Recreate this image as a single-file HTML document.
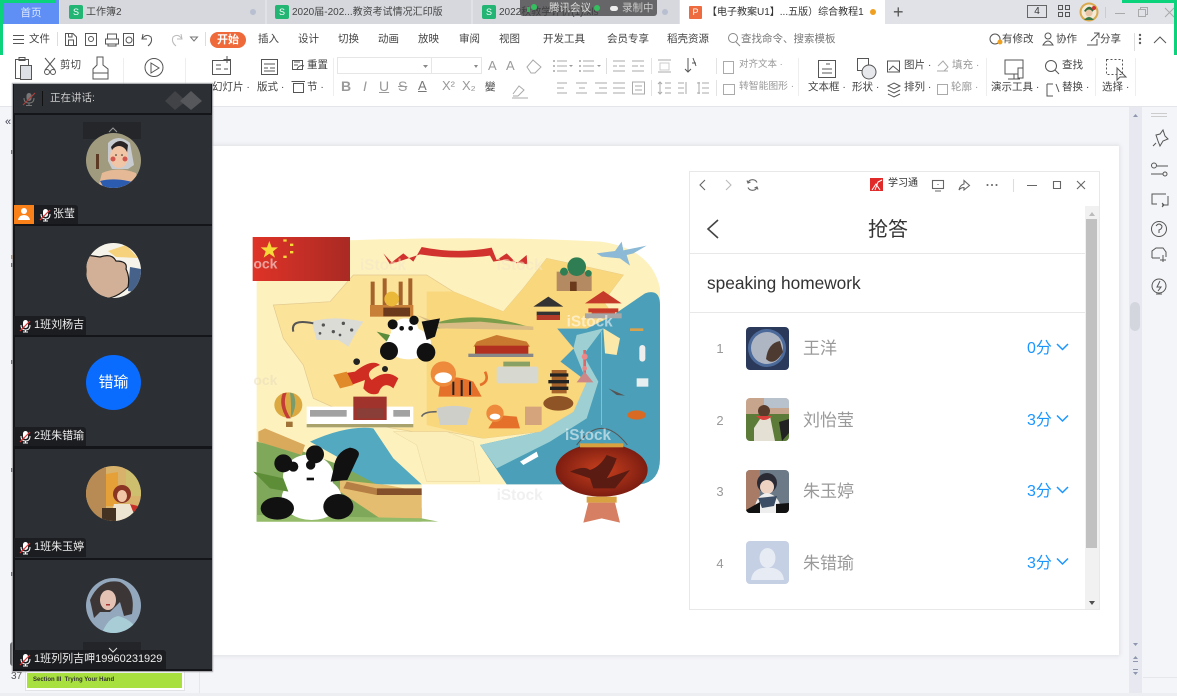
<!DOCTYPE html>
<html lang="zh"><head><meta charset="utf-8"><title>WPS</title>
<style>
html,body{margin:0;padding:0;width:1177px;height:696px;overflow:hidden;background:#f4f5f8;font-family:"Liberation Sans","Noto Sans CJK SC",sans-serif}
div,svg,span{position:absolute;box-sizing:border-box}
.t{white-space:nowrap;font-size:10.5px;color:#444;line-height:14px}
.g{color:#999}
.tab{top:0;height:24px;background:#d6d8dd}
.tt{top:5px;font-size:10px;color:#444;white-space:nowrap;line-height:15px}
.s{width:14px;height:14px;top:5px;background:#22b573;border-radius:2px;color:#fff;font-size:9px;line-height:14px;text-align:center}
.dot{width:6px;height:6px;border-radius:3px;background:#b8bfd0;top:9px}
.cell{left:15px;width:197px;height:109px;background:#2c2f33}
.av{left:86px;width:55px;height:55px;overflow:hidden;border-radius:50%}
.tag{left:14px;height:19px;background:#1c1d20;border-radius:0 3px 0 0;color:#eee;font-size:11px;line-height:19px;white-space:nowrap;padding-left:20px}
.mic{left:4px;top:3px;width:14px;height:14px}
.row{left:746px;width:43px;height:43px;border-radius:4px;overflow:hidden}
.n{left:716px;width:8px;font-size:13px;color:#999;text-align:center;line-height:18px}
.nm{left:803px;font-size:17px;color:#999;line-height:24px;white-space:nowrap}
.sc{left:1027px;font-size:16px;color:#1a96ff;line-height:22px;white-space:nowrap}
.k{width:2px;height:4px;left:11px;background:#667}
</style></head><body>

<!-- tab strip -->
<div style="left:0;top:0;width:1177px;height:24px;background:#e0e2e7"></div>
<div style="left:3px;top:0;width:56px;height:24px;background:#5f8ff5;color:#dfe8ff;font-size:10.5px;line-height:27px;text-align:center">首页</div>
<div class="tab" style="left:60px;width:205px"></div>
<div class="s" style="left:69px">S</div><div class="tt" style="left:86px">工作簿2</div><div class="dot" style="left:250px"></div>
<div class="tab" style="left:267px;width:204px"></div>
<div class="s" style="left:275px">S</div><div class="tt" style="left:292px">2020届-202...教资考试情况汇印版</div>
<div class="tab" style="left:473px;width:206px"></div>
<div class="s" style="left:482px">S</div><div class="tt" style="left:499px">2022秋教学评价(1).xls</div>
<div class="dot" style="left:662px"></div>
<div style="left:680px;top:0;width:205px;height:24px;background:#fff"></div>
<div style="left:689px;top:6px;width:13px;height:13px;background:#ee6b3f;border-radius:1px;color:#fff;font-size:9px;line-height:13px;text-align:center">P</div>
<div class="tt" style="left:707px;color:#333">【电子教案U1】...五版）综合教程1</div>
<div style="left:870px;top:9px;width:6px;height:6px;border-radius:3px;background:#f0a020"></div>
<div class="t" style="left:893px;top:2px;font-size:18px;line-height:20px;color:#555">+</div>
<!-- tencent overlay -->
<div style="left:520px;top:0;width:137px;height:16px;background:rgba(62,62,64,.74);border-radius:0 0 3px 3px"></div>
<div style="left:527px;top:7px;width:3px;height:5px;background:#35b35a"></div>
<div style="left:531px;top:4px;width:6px;height:6px;border-radius:3px;background:#35c060"></div>
<div class="t" style="left:549px;top:1px;color:#ddd">腾讯会议</div>
<div style="left:594px;top:5px;width:6px;height:6px;border-radius:3px;background:#35c060"></div>
<div style="left:610px;top:6px;width:8px;height:5px;background:#eee;border-radius:3px"></div>
<div class="t" style="left:622px;top:1px;color:#ccc">录制中</div>
<!-- title right -->
<div style="left:1027px;top:5px;width:20px;height:13px;border:1px solid #666;font-size:10px;line-height:11px;text-align:center;color:#333">4</div>
<svg style="left:1057px;top:4px" width="14" height="14" fill="none" stroke="#555"><rect x="1.5" y="1.5" width="4" height="4"/><rect x="8.5" y="1.5" width="4" height="4"/><rect x="1.5" y="8.5" width="4" height="4"/><rect x="8.5" y="8.5" width="4" height="4"/></svg>
<svg style="left:1079px;top:2px" width="20" height="20"><circle cx="10" cy="10" r="9.5" fill="#d9a94f"/><circle cx="10" cy="10" r="7.5" fill="#f3e9d5"/><path d="M5 9Q10 1 15 8L13 10H7Z" fill="#2e6b3d"/><circle cx="10" cy="11" r="3.5" fill="#eac4a4"/><path d="M5 18Q10 12 15 18Z" fill="#3a7a48"/><circle cx="15" cy="6" r="2" fill="#c33"/></svg>
<div style="left:1105px;top:7px;width:1px;height:11px;background:#ccc"></div>
<svg style="left:1114px;top:6px" width="62" height="14" fill="none" stroke="#aaa"><path d="M1 7.5H11"/><rect x="24.5" y="3.5" width="7" height="7"/><path d="M26.5 3.5V1.5H33.500V8.5H31.500"/><path d="M51 2L60 11M60 2L51 11"/></svg>
<!-- green corners -->
<div style="left:0;top:0;width:55px;height:3px;background:#0ad37c"></div>
<div style="left:0;top:0;width:3px;height:55px;background:#0ad37c"></div>
<div style="left:1122px;top:0;width:55px;height:3px;background:#0ad37c"></div>
<div style="left:1174px;top:0;width:3px;height:55px;background:#0ad37c"></div>

<!-- ribbon -->
<div style="left:3px;top:24px;width:1171px;height:31px;background:#fff"></div>
<div style="left:0;top:55px;width:1177px;height:51px;background:#fff"></div>
<div style="left:0;top:106px;width:1177px;height:1px;background:#e4e5ea"></div>
<svg style="left:0;top:24px" width="1177" height="82" fill="none" stroke="#555" stroke-width="1">
<path d="M13 11.500H24M13 15.500H24M13 19.500H24"/>
<path d="M57.500 8V22M205.500 8V22" stroke="#ddd"/>
<path d="M65.500 9.500H73L76.500 13V21.500H65.500ZM68.500 21V16H73.500V21M68.500 10V13H72V10"/>
<rect x="85.500" y="9.500" width="11" height="12"/><circle cx="91" cy="15" r="2.500"/>
<path d="M107.500 15V10H116.500V15M105.500 15H118.500V20H105.500ZM108 20V22H116V20"/>
<rect x="123.500" y="9.500" width="10" height="12"/><circle cx="129" cy="16" r="3"/>
<path d="M143 10L142 15H147M142 15Q146 9 151 13Q153 18 148 22"/>
<path d="M181 10L182 15H177M182 15Q178 9 173 13Q171 18 176 22" stroke="#bbb"/>
<path d="M190.500 13H197.500L194 17Z" stroke="#777"/>
<!-- toolbar big icons -->
<rect x="15.500" y="35.500" width="13" height="19"/><rect x="20.500" y="41.500" width="11" height="14" fill="#dde0e5"/><rect x="19" y="33.500" width="6" height="3"/>
<path d="M45 34L55 46M55 34L45 46"/><circle cx="47" cy="48" r="2.500"/><circle cx="53" cy="48" r="2.500"/>
<path d="M97 33H103V41L108 45V55H93V45L97 41Z"/><path d="M93 49H108"/>
<path d="M123.500 34V70M185.500 34V70M333.500 34V72" stroke="#eee"/>
<circle cx="154" cy="43.500" r="9"/><path d="M151 39L159 44L151 49Z"/>
<rect x="212.500" y="36.500" width="18" height="14"/><path d="M216 41H221M216 45H221M224 45H228M227 32V39M223.500 35.500H231"/>
<rect x="261.500" y="35.500" width="16" height="15"/><path d="M264 40H275M264 44H268M270 44H275M264 47H275"/>
<rect x="292.500" y="36.500" width="10" height="9"/><path d="M304 42A5 5 0 0 0 297 46M294 38H300M294 41H298"/>
<rect x="293.500" y="59.500" width="10" height="9"/><path d="M291.500 57.500H305"/>
<!-- font inputs -->
<rect x="337.500" y="33.500" width="94" height="16" stroke="#e6e6e6"/><rect x="431.500" y="33.500" width="50" height="16" stroke="#e6e6e6"/>
<path d="M423 41L428 41L425.500 44ZM474 41L478 41L476 44" fill="#888" stroke="none"/>
<g stroke="#aaa">
<path d="M527 43L533 36L541 43L535 49H531Z"/>
<!-- list row 1 -->
<path d="M557 37H567M557 42H567M557 47H567M583 37H594M583 42H594M583 47H594" />
<path d="M553 37H555M553 42H555M553 47H555M579 37H581M579 42H581M579 47H581" stroke="#777"/>
<path d="M569 41H573L571 43ZM597 41H601L599 43Z" fill="#999" stroke="none"/>
<path d="M606.500 34V50" stroke="#ddd"/>
<path d="M613 37H625M619 42H625M613 47H625M613 42H617M632 37H644M632 42H638M632 47H644M640 42H644"/>
<path d="M658 36H671M658 48H671"/><rect x="660" y="39" width="9" height="7" stroke="#ccc"/>
<path d="M651.500 34V50M651.500 56V72M716.500 34V50M716.500 56V72" stroke="#e3e3e3"/>
<path d="M688 34V48M685 45L688 48L691 45" stroke="#555"/><path d="M693 34L696 42M692 39H696" stroke="#555"/>
<!-- list row 2 -->
<path d="M557 59H567M557 64H564M557 69H567M576 59H587M579 64H585M576 69H587M595 59H607M599 64H607M595 69H607M613 59H625M613 64H625M613 69H625M632.500 58V70H644.500V58ZM635 62H642M635 66H642"/>
<path d="M660 58V70M658 60L660 58L662 60M658 68L660 70L662 68M665 59H671M665 64H671M665 69H671M678 59H684M678 64H684M678 69H684M686 58V70M697 59H700M697 69H700M702 59H709M702 64H709M702 69H709M699 58V70"/>
<rect x="723.500" y="37.500" width="10" height="12"/><rect x="723.500" y="60.500" width="11" height="10"/>
</g>
<path d="M798.500 34V72M986.500 34V72M1095.500 34V72M1135.500 34V72" stroke="#eee"/>
<rect x="818.500" y="36.500" width="17" height="17"/><path d="M822 45H832M822 49H832M826 40H830"/>
<rect x="857.500" y="34.500" width="11" height="12"/><circle cx="869" cy="48" r="7" fill="#e7e8ec"/>
<rect x="887.500" y="37" width="12" height="11"/><path d="M889 46L893 42L899 47"/>
<path d="M888 62L894 59L900 62L894 65ZM888 66L894 69L900 66M888 70L894 73L900 70"/>
<path d="M937 47H948M938 42L943 37L948 43L944 47" stroke="#aaa"/><rect x="937.500" y="60.500" width="10" height="10" stroke="#aaa"/>
<path d="M1005 36H1023V50H1005ZM1014 50V55M1008 55H1020"/><rect x="1018" y="44" width="5" height="10" fill="#fff"/>
<circle cx="1051" cy="42" r="5.500"/><path d="M1055 46L1059 50"/>
<path d="M1047 60H1053M1047 60V72H1053M1056 60L1059 68"/>
<rect x="1106.500" y="35.500" width="16" height="15" stroke-dasharray="2 2"/><path d="M1117 44V56L1120 53L1126 53Z"/>
<path d="M1154 19L1160 13L1166 19"/>
<circle cx="1140" cy="11" r="0.700"/><circle cx="1140" cy="15" r="0.700"/><circle cx="1140" cy="19" r="0.700"/>
<path d="M1134.500 9V27" stroke="#ddd"/>
<circle cx="995" cy="15" r="5"/><circle cx="1000" cy="18" r="2.500" fill="#f0a020" stroke="none"/>
<circle cx="1048" cy="12" r="3"/><path d="M1043 21Q1048 13 1053 21Z"/>
<path d="M1087 21H1097V15M1091 17L1099 9M1094 9H1099V14"/>
<circle cx="733" cy="14" r="4.500" stroke="#888"/><path d="M736 18L740 22" stroke="#888"/>
<path d="M513 70L519 62L524 66L518 72H513M512 74H528" stroke="#aaa"/>
</svg>
<div style="left:210px;top:32px;width:36px;height:16px;background:#ee6a3a;border-radius:8px;color:#fff;font-size:11px;font-weight:bold;line-height:16px;text-align:center">开始</div>
<span class="t" style="left:29px;top:32px">文件</span>
<span class="t" style="left:258px;top:32px">插入</span><span class="t" style="left:298px;top:32px">设计</span><span class="t" style="left:338px;top:32px">切换</span><span class="t" style="left:378px;top:32px">动画</span><span class="t" style="left:418px;top:32px">放映</span><span class="t" style="left:459px;top:32px">审阅</span><span class="t" style="left:499px;top:32px">视图</span><span class="t" style="left:543px;top:32px">开发工具</span><span class="t" style="left:607px;top:32px">会员专享</span><span class="t" style="left:667px;top:32px">稻壳资源</span>
<span class="t" style="left:741px;top:32px;color:#777">查找命令、搜索模板</span>
<span class="t" style="left:1002px;top:32px">有修改</span><span class="t" style="left:1056px;top:32px">协作</span><span class="t" style="left:1100px;top:32px">分享</span>
<span class="t" style="left:60px;top:58px">剪切</span><span class="t" style="left:307px;top:58px">重置</span><span class="t g" style="left:739px;top:58px;font-size:9.500px">对齐文本 ·</span><span class="t" style="left:904px;top:58px">图片 ·</span><span class="t g" style="left:952px;top:58px">填充 ·</span><span class="t" style="left:1062px;top:58px">查找</span>
<span class="t" style="left:212px;top:80px">幻灯片 ·</span><span class="t" style="left:257px;top:80px">版式 ·</span><span class="t" style="left:307px;top:80px">节 ·</span><span class="t g" style="left:739px;top:80px;font-size:9.800px">转智能图形 ·</span><span class="t" style="left:808px;top:80px">文本框 ·</span><span class="t" style="left:852px;top:80px">形状 ·</span><span class="t" style="left:904px;top:80px">排列 ·</span><span class="t g" style="left:951px;top:80px">轮廓 ·</span><span class="t" style="left:991px;top:80px">演示工具 ·</span><span class="t" style="left:1062px;top:80px">替换 ·</span><span class="t" style="left:1102px;top:80px">选择 ·</span>
<span class="t g" style="left:341px;top:79px;font-size:14px;font-weight:bold">B</span><span class="t g" style="left:363px;top:79px;font-size:14px;font-style:italic">I</span><span class="t g" style="left:379px;top:79px;font-size:14px;text-decoration:underline">U</span><span class="t g" style="left:398px;top:79px;font-size:14px;text-decoration:line-through">S</span><span class="t" style="left:418px;top:79px;font-size:13px;color:#777;text-decoration:underline">A</span><span class="t g" style="left:442px;top:79px;font-size:13px">X²</span><span class="t g" style="left:462px;top:79px;font-size:13px">X₂</span><span class="t" style="left:485px;top:80px">變</span><span class="t g" style="left:488px;top:59px;font-size:13px">A</span><span class="t g" style="left:506px;top:59px;font-size:13px">A</span>

<!-- workspace -->
<div style="left:0;top:107px;width:200px;height:589px;background:#f4f5f8;border-right:1px solid #e6e7eb"></div>
<div class="t" style="left:5px;top:115px;font-size:11px;color:#445">«</div>
<div class="k" style="top:150px"></div><div class="k" style="top:255px;background:#d9924a"></div><div class="k" style="top:263px"></div><div class="k" style="top:360px"></div><div class="k" style="top:468px"></div><div class="k" style="top:572px"></div>
<div style="left:212px;top:146px;width:907px;height:509px;background:#fff;box-shadow:0 0 4px 1px #dfe0e4"></div>

<!-- map -->
<svg style="left:240px;top:225px" width="430" height="310" viewBox="0 0 1290 930">
<defs><linearGradient id="fl"><stop offset="0" stop-color="#df3327"/><stop offset="1" stop-color="#a92a24"/></linearGradient>
<radialGradient id="la" cx=".5" cy=".5" r=".6"><stop offset="0" stop-color="#c8401d"/><stop offset="1" stop-color="#6e160f"/></radialGradient></defs>
<path d="M50 60Q600 25 1080 50Q1235 70 1260 190V690Q1260 770 1200 778H545V890H50V200Z" fill="#fdf1bd"/>
<path d="M1215 205Q1260 190 1260 240V700Q1260 770 1200 778H800L720 660L900 620L1000 560L1040 470L960 410L1000 370L950 310H1040L1120 270Z" fill="#4c9fb8"/>
<path d="M1000 370L1040 470L1000 560L900 620L720 660L770 730L930 650L1040 580L1075 470L1030 390L1090 310L1010 330Z" fill="#9ed0d3"/>
<path d="M1090 310L1140 340L1130 390L1095 385Z" fill="#fbe9a9"/>
<path d="M210 650Q320 600 400 610L460 700L545 778H330L300 700Z" fill="#52a9c0"/>
<path d="M100 240L270 230L340 150L560 150L640 200L790 260L850 190L920 100L1060 130L1150 150L1090 230L1120 270L1040 310L950 310L1000 370L960 410L1040 470L1000 560L900 620L730 640L620 620L520 620L400 600L220 520L190 420L130 340Z" fill="#fbe39a" stroke="#e3c98e" stroke-width="2"/>
<path d="M560 200L640 200L790 260L850 190L920 100L1060 130L1150 150L1090 230L1120 270L1040 310L950 310L1000 370L960 410L1040 470L1000 560L900 620L730 640L560 600Z" fill="#f9d77c"/>
<path d="M460 620L530 660L560 770H720L700 650L620 620Z" fill="#fbeeb8" stroke="#e3c98e"/>
<!-- flag -->
<rect x="38" y="36" width="292" height="132" fill="url(#fl)"/>
<path d="M88 48L95 67L114 67L99 79L105 98L88 86L71 98L77 79L62 67H81Z" fill="#f8d93a"/>
<path d="M130 43h10v7h-10zM150 56h10v7h-10zM150 78h10v7h-10zM130 92h10v7h-10z" fill="#f8d93a"/>
<!-- ribbon -->
<path d="M430 85L455 112L490 85L520 110L545 66Q650 88 755 68L770 105L800 85L830 115L860 90L862 118L820 110L790 105L760 110L750 92Q650 105 540 88L490 105L450 118Z" fill="#d2322d"/>
<!-- plane -->
<path d="M1070 85L1125 78L1145 50L1150 76L1220 62L1180 85L1160 90L1170 122L1140 100L1085 95Z" fill="#8cb9d5"/>
<!-- mosque -->
<path d="M392 170h12v100h-12zM428 160h12v110h-12zM476 170h12v100h-12zM505 160h12v110h-12z" fill="#a5632b"/>
<rect x="390" y="240" width="130" height="35" fill="#c87f38"/><circle cx="455" cy="222" r="22" fill="#eab93a"/><path d="M430 248h80v26h-80z" fill="#6b3a1c"/>
<!-- cathedral -->
<rect x="950" y="140" width="105" height="58" fill="#b48a62"/><circle cx="1010" cy="125" r="28" fill="#2f7d52"/><circle cx="972" cy="140" r="12" fill="#2f7d52"/><circle cx="1045" cy="145" r="10" fill="#2f7d52"/><rect x="990" y="170" width="20" height="28" fill="#6b3a1c"/>
<!-- pagodas -->
<path d="M880 245L925 215L970 245ZM890 260H960V272H890Z" fill="#333"/><rect x="890" y="270" width="70" height="15" fill="#b33a28"/>
<path d="M1035 235L1090 198L1145 235ZM1045 250H1135V262H1045Z" fill="#c63a2a"/><rect x="1055" y="262" width="70" height="15" fill="#c63a2a"/><rect x="1035" y="265" width="110" height="15" fill="#a7a7a7"/>
<!-- great wall mid -->
<path d="M570 300Q700 250 880 310H570Z" fill="#7c9d4a"/><path d="M530 270L600 295L720 290L880 305L880 315L600 310Z" fill="#d9bc83"/>
<!-- leopard -->
<path d="M215 290Q280 270 370 290L350 320L325 365L295 345L230 345Z" fill="#dcdcd6"/>
<path d="M220 295Q150 280 160 320" stroke="#555" stroke-width="6" fill="none"/>
<g fill="#555"><circle cx="250" cy="300" r="5"/><circle cx="280" cy="320" r="5"/><circle cx="310" cy="295" r="5"/><circle cx="335" cy="315" r="5"/><circle cx="240" cy="325" r="4"/><circle cx="300" cy="330" r="4"/></g>
<!-- panda -->
<ellipse cx="505" cy="355" rx="68" ry="48" fill="#fff"/><circle cx="495" cy="322" r="42" fill="#fff"/><circle cx="447" cy="378" r="27" fill="#111"/><circle cx="558" cy="382" r="28" fill="#111"/>
<circle cx="458" cy="298" r="15" fill="#111"/><circle cx="522" cy="286" r="14" fill="#111"/><path d="M545 290L600 280L585 335L560 345Z" fill="#111"/>
<circle cx="485" cy="310" r="7" fill="#111"/><circle cx="512" cy="310" r="7" fill="#111"/>
<path d="M410 320L450 330L440 350Z" fill="#5b8c3b"/>
<!-- palace -->
<path d="M710 350L770 330L860 350L870 365H700Z" fill="#c9792f"/><rect x="705" y="362" width="160" height="28" fill="#b2301f"/><rect x="685" y="386" width="195" height="10" fill="#888"/>
<!-- terracotta -->
<rect x="770" y="425" width="125" height="50" rx="6" fill="#d7d8cf"/><path d="M790 410h80v14h-80z" fill="#8aa166"/>
<!-- yellow pagoda -->
<path d="M935 435h45v70h-45z" fill="#a5632b"/><path d="M930 445h55v10h-55zM925 465h62v10h-62zM930 485h55v10h-55z" fill="#222"/>
<ellipse cx="955" cy="535" rx="45" ry="22" fill="#8f5426"/>
<!-- tower -->
<path d="M1030 375h8v90h-8z" fill="#d66"/><circle cx="1034" cy="395" r="9" fill="#e88"/><circle cx="1034" cy="430" r="7" fill="#e88"/><path d="M1010 472L1034 440L1060 472Z" fill="#c88"/>
<path d="M1085 320V600" stroke="#a9cfd2" stroke-width="2"/>
<!-- boats -->
<ellipse cx="1190" cy="570" rx="28" ry="14" fill="#d96a24"/><path d="M1105 490L1155 512L1130 510Z" fill="#555"/><rect x="1198" y="360" width="18" height="50" rx="9" fill="#eee"/><path d="M1170 310h40v8h-40z" fill="#d9a24d"/><path d="M840 710L890 680L895 695L850 720Z" fill="#fff"/><path d="M1190 460h35v25h-35z" fill="#e8eff0"/>
<!-- tiger -->
<path d="M610 460Q650 450 700 470L725 515H595L600 480Z" fill="#e4702a"/><circle cx="610" cy="447" r="38" fill="#ed8a3c"/><ellipse cx="610" cy="458" rx="26" ry="16" fill="#fff"/><path d="M640 470v40M665 465v48M690 470v40" stroke="#222" stroke-width="6"/><path d="M720 480Q750 470 735 440" stroke="#e4702a" stroke-width="8" fill="none"/>
<path d="M770 570L830 575L840 610H745Z" fill="#e4702a"/><circle cx="765" cy="565" r="26" fill="#ed8a3c"/><ellipse cx="765" cy="575" rx="16" ry="9" fill="#fff"/>
<!-- dragon -->
<path d="M280 450L345 440Q395 400 420 420Q370 440 395 465Q440 430 475 460L460 490Q430 465 415 505Q390 515 370 490L375 465L320 485Z" fill="#cf2c22"/><path d="M280 450L320 440L340 480L300 490Z" fill="#e08a2a"/><circle cx="350" cy="410" r="10" fill="#222"/><circle cx="435" cy="432" r="9" fill="#222"/>
<!-- balloon -->
<ellipse cx="145" cy="540" rx="42" ry="38" fill="#dca940"/><path d="M128 505Q115 540 140 580L152 580Q125 540 140 503Z" fill="#c33d36"/><path d="M160 506Q175 540 152 580Q155 540 150 503Z" fill="#7a9c6d"/><rect x="138" y="590" width="20" height="16" fill="#a07238"/>
<!-- potala -->
<path d="M200 545h320v62H200Z" fill="#fff"/><path d="M340 515h100v70H340Z" fill="#a0342c"/><rect x="200" y="597" width="320" height="10" fill="#a9a26d"/><g fill="#555"><rect x="210" y="555" width="110" height="20" opacity=".55"/><rect x="460" y="555" width="50" height="20" opacity=".55"/><rect x="350" y="550" width="80" height="30" opacity=".3"/></g>
<!-- leopard 2 -->
<path d="M590 550Q640 535 695 550L680 600H600Z" fill="#cfcfca"/><path d="M590 560Q550 560 545 575" stroke="#666" stroke-width="5" fill="none"/>
<path d="M855 545h50v55h-50z" fill="#d5a47c"/>
<!-- bottom left -->
<path d="M50 650L190 680L300 720L545 850V890H50Z" fill="#7fa85a"/>
<path d="M55 620L75 610L195 660L185 690L55 650Z" fill="#d9a95c"/>
<path d="M300 765L440 780L545 800V880H420L300 800Z" fill="#e4bd70"/><path d="M410 790h135v20h-135z" fill="#84502c"/><path d="M320 770L410 790V810L310 790Z" fill="#b57e44"/>
<path d="M545 880L595 890H50V870Z" fill="#94bb6a"/>
<ellipse cx="215" cy="820" rx="90" ry="65" fill="#fff"/><ellipse cx="205" cy="755" rx="76" ry="66" fill="#fff"/>
<path d="M280 735Q285 680 330 668Q368 675 352 700L322 765L272 770Z" fill="#111"/><circle cx="130" cy="715" r="27" fill="#111"/><circle cx="225" cy="688" r="27" fill="#111"/><circle cx="160" cy="725" r="15" fill="#111"/><circle cx="212" cy="720" r="14" fill="#111"/><path d="M200 758h22v8h-22z" fill="#111"/>
<ellipse cx="112" cy="850" rx="50" ry="34" fill="#111"/><ellipse cx="295" cy="845" rx="45" ry="38" fill="#111"/>
<path d="M40 740L130 760L145 800L90 790Z" fill="#5e8d38"/>
<!-- lantern -->
<path d="M1010 660Q1085 560 1162 660" stroke="#555" stroke-width="3" fill="none"/>
<ellipse cx="1085" cy="735" rx="138" ry="80" fill="url(#la)"/><rect x="1020" y="655" width="130" height="12" fill="#d9a240"/><rect x="1040" y="815" width="90" height="18" fill="#d9a240"/><path d="M1045 833H1125L1140 893L1085 880L1030 893Z" fill="#d67f63"/><path d="M990 740Q1030 720 1050 735Q1080 725 1100 690L1130 700Q1120 730 1100 760L1170 735L1125 790H1060L1050 760Z" fill="#5a1c12"/>
<g font-family="Liberation Sans,sans-serif" font-weight="bold" fill="#fff" opacity=".55">
<text x="975" y="645" font-size="46">iStock</text><text x="770" y="825" font-size="46" fill="#e4e4e4">iStock</text><text x="980" y="305" font-size="46">iStock</text><text x="360" y="135" font-size="46" fill="#f4e7c9">iStock</text>
<text x="40" y="130" font-size="42">ock</text><text x="770" y="135" font-size="46" fill="#f4e7c9">iStock</text><text x="40" y="480" font-size="42" fill="#e8ddbd">ock</text></g>
</svg>

<!-- chaoxing window -->
<div style="left:689px;top:171px;width:411px;height:439px;background:#fff;border:1px solid #e8e8e8"></div>
<svg style="left:689px;top:171px" width="411" height="40" fill="none" stroke="#666" stroke-width="1.100">
<path d="M16 9L11 14L16 19"/><path d="M37 9L42 14L37 19" stroke="#bbb"/>
<path d="M59 11.500A5 5 0 0 1 68 11.500M68 16.500A5 5 0 0 1 59 16.500M58 9.500L59 12L61.500 11M69 18.500L68 16L65.500 17"/>
<rect x="181" y="7" width="13" height="13" fill="#e02a2a" stroke="none"/><path d="M183 19L187 13L191 19M186 19L189 11L193 9" stroke="#fff" stroke-width="1"/>
<rect x="243.500" y="9.500" width="11" height="8"/><path d="M246 20H252M249 13V14"/>
<path d="M270 19Q271 14 275 13V9.500L280.500 14.500L275 19V16.500Q272 16.500 270 19Z"/>
<circle cx="298.500" cy="14" r=".5" fill="#666"/><circle cx="303" cy="14" r=".5" fill="#666"/><circle cx="307.500" cy="14" r=".5" fill="#666"/>
<path d="M324.500 8V21" stroke="#ddd"/>
<path d="M338 14.500H348M364.500 10.500H371.500V17.500H364.500ZM388 10L396 18M396 10L388 18"/>
</svg>
<div class="t" style="left:888px;top:177px;color:#333;font-size:10px">学习通</div>
<svg style="left:705px;top:218px" width="16" height="22" fill="none" stroke="#444" stroke-width="1.600"><path d="M13 2L3 11L13 20"/></svg>
<div style="left:868px;top:217px;width:40px;font-size:20px;line-height:26px;color:#333;white-space:nowrap">抢答</div>
<div style="left:690px;top:253px;width:395px;height:1px;background:#e8e8e8"></div>
<div style="left:690px;top:312px;width:395px;height:1px;background:#e8e8e8"></div>
<div style="left:707px;top:272px;font-size:17.300px;line-height:22px;color:#333;white-space:nowrap">speaking homework</div>
<div style="left:1085px;top:206px;width:14px;height:403px;background:#f1f1f1"></div>
<div style="left:1086px;top:219px;width:11px;height:329px;background:#c1c1c1"></div>
<svg style="left:1085px;top:208px" width="14" height="400"><path d="M4 8L7 4L10 8Z" fill="#bbb"/><path d="M4 393H10L7 397Z" fill="#505050"/></svg>

<div class="n" style="top:340px">1</div><div class="n" style="top:412px">2</div><div class="n" style="top:483px">3</div><div class="n" style="top:555px">4</div>
<svg class="row" style="top:327px" viewBox="0 0 43 43"><rect width="43" height="43" fill="#2b3a5a"/><circle cx="21" cy="21" r="19" fill="#4c6a9a"/><circle cx="21" cy="21" r="16" fill="#aeb6c4"/><path d="M20 32Q22 16 34 14L37 25Q28 40 20 32Z" fill="#4d3a30"/></svg>
<svg class="row" style="top:398px" viewBox="0 0 43 43"><rect width="43" height="18" fill="#c7a48c"/><rect x="18" width="25" height="10" fill="#b8c2cc"/><rect y="16" width="43" height="27" fill="#5c7a38"/><path d="M8 30L16 18H24L29 43H8Z" fill="#e4e0d4"/><circle cx="18" cy="13" r="6" fill="#5a3c2c"/><path d="M10 18Q18 26 26 18Z" fill="#d9423c"/><path d="M33 24L43 21V35L36 43Z" fill="#222"/></svg>
<svg class="row" style="top:470px" viewBox="0 0 43 43"><rect width="43" height="43" fill="#6b7a86"/><rect width="14" height="43" fill="#a77b66"/><circle cx="21" cy="13" r="10" fill="#2a2a35"/><ellipse cx="21" cy="17" rx="7" ry="7" fill="#eed3c3"/><path d="M8 43Q9 25 21 23Q34 25 36 43Z" fill="#eee"/><path d="M12 28L31 26L28 36L16 38Z" fill="#3c4e66"/><path d="M0 40L14 32V43H0ZM30 34L43 33V43H30Z" fill="#111"/></svg>
<svg class="row" style="top:541px" viewBox="0 0 43 43"><rect width="43" height="43" fill="#c5d0e4"/><ellipse cx="21.500" cy="17" rx="8" ry="10" fill="#e6ebf4"/><path d="M5 39Q6 29 16 27H27Q37 29 38 39Z" fill="#e6ebf4"/></svg>
<div class="nm" style="top:337px">王洋</div><div class="nm" style="top:409px">刘怡莹</div><div class="nm" style="top:480px">朱玉婷</div><div class="nm" style="top:552px">朱错瑜</div>
<div class="sc" style="top:338px">0分</div><div class="sc" style="top:410px">3分</div><div class="sc" style="top:481px">3分</div><div class="sc" style="top:553px">3分</div>
<svg style="left:1056px;top:342px" width="13" height="240" fill="none" stroke="#1a96ff" stroke-width="1.500"><path d="M1 2L6.500 7.500L12 2M1 73.500L6.500 79L12 73.500M1 145L6.500 150.500L12 145M1 216.500L6.500 222L12 216.500"/></svg>

<!-- right sidebar -->
<div style="left:1129px;top:107px;width:13px;height:589px;background:#e8e9f0"></div>
<div style="left:1130px;top:302px;width:10px;height:29px;border-radius:5px;background:#d4d6de"></div>
<svg style="left:1129px;top:110px" width="13" height="570" fill="#8f97ae"><path d="M4 7L6.500 4L9 7ZM4 533L9 533L6.500 536ZM4 549L6.500 546L9 549ZM4 551H9V552H4ZM4 559H9V560H4ZM4 562H9L6.500 565Z"/></svg>
<svg style="left:1148px;top:110px" width="24" height="190" fill="none" stroke="#555"><path d="M3 3.500H19M3 6.500H19" stroke="#ccc"/>
<path d="M8 25L12 24L15 20L17 26L20 29L15 31L12 36L10 31Z M5 36L8 33"/>
<path d="M9 56H20M3 64H15M6 53A2 2 0 1 0 6 58M6 53A2 2 0 1 1 6 58"/><circle cx="17" cy="64" r="2"/>
<path d="M4 89V84H18M4 84V94H9M20 86V95H14M14 93L16 95L14 97"/>
<circle cx="11" cy="119" r="7.500"/><path d="M8 116Q11 112 14 116Q14 119 11 120V123"/>
<path d="M4 148V141L8 138H15L18 142V147M4 148H12M12 150L18 150M15 145L15 152"/>
<circle cx="11" cy="176" r="7"/><path d="M8 184H14M12 171L9 177H13L10 181"/></svg>
<div style="left:1143px;top:677px;width:34px;height:1px;background:#e6e7eb"></div>
<div style="left:0;top:693px;width:1177px;height:3px;background:#eceef2"></div>

<!-- bottom left thumb -->
<div class="t" style="left:11px;top:670px;color:#555;font-size:10px">37</div>
<div style="left:25px;top:671px;width:160px;height:20px;background:#fff;border:1px solid #e2e3e7"></div>
<div style="left:27px;top:673px;width:155px;height:15px;background:#a7e03f;color:#333;font-size:6px;font-weight:bold;line-height:15px;padding-left:6px;white-space:nowrap">Section III&nbsp; Trying Your Hand</div>

<!-- meeting panel -->
<div style="left:10px;top:642px;width:4px;height:24px;background:#6a6c70;border-radius:3px 0 0 3px"></div>
<div style="left:13px;top:84px;width:199px;height:587px;background:#141518;box-shadow:0 0 1px 1px #9a9b9f"></div>
<div style="left:14px;top:84px;width:197px;height:29px;background:#2c2f33"></div>
<svg style="left:20px;top:90px" width="18" height="18"><rect x="6.500" y="3" width="5" height="8" rx="2.500" fill="#777"/><path d="M4 8Q4 13 9 13Q14 13 14 8M9 13V15M6 15.500H12" stroke="#777" fill="none"/><path d="M3 15L15 3" stroke="#a8403c" stroke-width="1.200"/></svg>
<div style="left:42px;top:91px;width:1px;height:15px;background:#111"></div>
<div class="t" style="left:50px;top:91px;color:#ccc;font-size:10.500px">正在讲话:</div>
<svg style="left:164px;top:88px" width="40" height="22"><path d="M11 3L22 13L11 22L1 13Z" fill="#414346"/><path d="M27 3L38 13L27 22L16 13Z" fill="#55575b"/></svg>
<div class="cell" style="top:115px"></div><div class="cell" style="top:226px"></div><div class="cell" style="top:337px"></div><div class="cell" style="top:449px"></div><div class="cell" style="top:560px"></div>
<div style="left:83px;top:122px;width:58px;height:17px;background:#242629"></div>

<svg class="av" style="top:133px" viewBox="0 0 55 55"><rect width="55" height="55" fill="#a09a7e"/><path d="M22 10Q32 0 44 10L48 32L42 36H26L22 28Z" fill="#c8ccd0"/><path d="M25 14Q33 3 42 12L41 20Q33 14 27 20Z" fill="#2a2325"/><ellipse cx="33" cy="24" rx="9" ry="11" fill="#f1c6a6"/><circle cx="27" cy="26" r="2.500" fill="#d2584f"/><circle cx="39" cy="26" r="2.500" fill="#d2584f"/><circle cx="30" cy="22" r=".8" fill="#222"/><circle cx="36" cy="22" r=".8" fill="#222"/><path d="M12 55L16 40Q32 33 50 40L54 55Z" fill="#e5b995"/><path d="M14 48Q30 44 50 50L42 55H18Z" fill="#2b5cb0"/><rect x="10" y="21" width="3" height="15" fill="#5c3a24"/></svg>
<svg style="left:106px;top:126px" width="14" height="8" fill="none" stroke="#999"><path d="M3 6L7 2L11 6"/></svg>

<svg class="av" style="top:243px" viewBox="0 0 55 55"><rect width="55" height="55" fill="#f5f3ea"/><path d="M22 8L40 2L52 15L30 14Z" fill="#f6d27c"/><path d="M44 24L55 26V50L42 48Z" fill="#47628a"/><path d="M0 12L14 14Q26 10 30 18Q42 18 40 26Q44 34 42 44Q28 58 12 55H0Z" fill="#d2b098" stroke="#1b1b1b" stroke-width="1.200"/></svg>
<div class="av" style="top:355px;background:#0a6cff;color:#fff;font-size:15px;line-height:55px;text-align:center">错瑜</div>
<svg class="av" style="top:466px" viewBox="0 0 55 55"><rect width="55" height="55" fill="#d8b26a"/><rect width="20" height="55" fill="#b88a54"/><rect x="40" width="15" height="30" fill="#cdbf6d"/><path d="M20 8L32 6L32 40L20 40Z" fill="#e5a038"/><circle cx="36" cy="28" r="9" fill="#8a3424"/><ellipse cx="36" cy="30" rx="5" ry="6" fill="#f1c6a6"/><path d="M24 55L28 38H46L50 55Z" fill="#eee4d2"/><path d="M16 42h14v13H16z" fill="#432"/><path d="M44 38l8 2-4 8z" fill="#c73028"/></svg>
<svg class="av" style="top:578px" viewBox="0 0 55 55"><rect width="55" height="55" fill="#93a7bd"/><path d="M4 22Q14 0 34 4Q50 12 46 36L38 38L34 24L24 34L14 34L8 40Z" fill="#3c3636"/><ellipse cx="22" cy="22" rx="8" ry="10" fill="#e5c3b4"/><path d="M20 26h4v1.500h-4z" fill="#a33"/><path d="M16 55Q22 40 32 38Q48 42 52 55Z" fill="#a8cdd6"/></svg>
<div style="left:83px;top:642px;width:58px;height:18px;background:#242528"></div>

<div style="left:14px;top:205px;width:20px;height:19px;background:#fa8119"></div>
<svg style="left:17px;top:207px" width="14" height="15" fill="#fff"><circle cx="7" cy="4" r="3"/><path d="M1 13Q2 8 7 8Q12 8 13 13Z"/></svg>
<div class="tag" style="left:34px;top:205px;width:44px;padding-left:19px">张莹<svg class="mic" width="14" height="14"><rect x="5" y="1" width="5" height="8" rx="2.500" fill="#fff"/><path d="M3 6Q3 11 7.500 11Q12 11 12 6M7.500 11V13M5 13H10" stroke="#fff" fill="none"/><path d="M2 12L12 2" stroke="#d33" stroke-width="1.200"/></svg></div>
<div class="tag" style="top:316px;width:72px">1班刘杨吉<svg class="mic" width="14" height="14"><rect x="5" y="1" width="5" height="8" rx="2.500" fill="#fff"/><path d="M3 6Q3 11 7.500 11Q12 11 12 6M7.500 11V13M5 13H10" stroke="#fff" fill="none"/><path d="M2 12L12 2" stroke="#d33" stroke-width="1.200"/></svg></div>
<div class="tag" style="top:427px;width:72px">2班朱错瑜<svg class="mic" width="14" height="14"><rect x="5" y="1" width="5" height="8" rx="2.500" fill="#fff"/><path d="M3 6Q3 11 7.500 11Q12 11 12 6M7.500 11V13M5 13H10" stroke="#fff" fill="none"/><path d="M2 12L12 2" stroke="#d33" stroke-width="1.200"/></svg></div>
<div class="tag" style="top:538px;width:72px">1班朱玉婷<svg class="mic" width="14" height="14"><rect x="5" y="1" width="5" height="8" rx="2.500" fill="#fff"/><path d="M3 6Q3 11 7.500 11Q12 11 12 6M7.500 11V13M5 13H10" stroke="#fff" fill="none"/><path d="M2 12L12 2" stroke="#d33" stroke-width="1.200"/></svg></div>
<div class="tag" style="top:650px;width:152px">1班列列吉呷19960231929<svg class="mic" width="14" height="14"><rect x="5" y="1" width="5" height="8" rx="2.500" fill="#fff"/><path d="M3 6Q3 11 7.500 11Q12 11 12 6M7.500 11V13M5 13H10" stroke="#fff" fill="none"/><path d="M2 12L12 2" stroke="#d33" stroke-width="1.200"/></svg></div>
<svg style="left:106px;top:646px" width="14" height="9" fill="none" stroke="#ddd"><path d="M3 2L7 6L11 2"/></svg>
</body></html>
